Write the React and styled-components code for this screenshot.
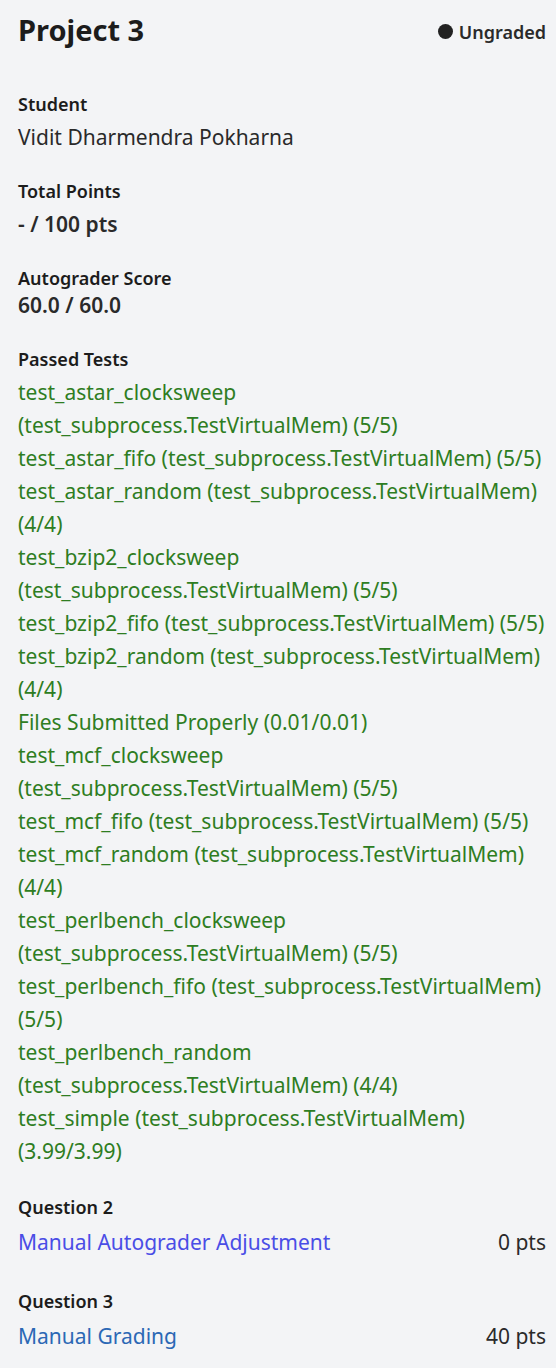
import styled, { createGlobalStyle } from 'styled-components';

const GlobalStyle = createGlobalStyle`
  html, body {
    margin: 0;
    padding: 0;
    background: #f3f4f6;
  }
  body {
    font-family: "Noto Sans", "Open Sans", sans-serif;
    color: #222;
  }
`;

const tests = [
  ['test_astar_clocksweep', '5/5'],
  ['test_astar_fifo', '5/5'],
  ['test_astar_random', '4/4'],
  ['test_bzip2_clocksweep', '5/5'],
  ['test_bzip2_fifo', '5/5'],
  ['test_bzip2_random', '4/4'],
  ['Files Submitted Properly', '0.01/0.01', true],
  ['test_mcf_clocksweep', '5/5'],
  ['test_mcf_fifo', '5/5'],
  ['test_mcf_random', '4/4'],
  ['test_perlbench_clocksweep', '5/5'],
  ['test_perlbench_fifo', '5/5'],
  ['test_perlbench_random', '4/4'],
  ['test_simple', '3.99/3.99'],
];

const questions = [
  { label: 'Question 2', title: 'Manual Autograder Adjustment', points: '0 pts', color: '#4a4de6', top: 27 },
  { label: 'Question 3', title: 'Manual Grading', points: '40 pts', color: '#2b68b5', top: 30 },
];

export default function App() {
  return (
    <>
      <GlobalStyle />
      <Page>
        <Header>
          <Title>Project 3</Title>
          <Status>
            <Dot />
            Ungraded
          </Status>
        </Header>

        <Section $top={44}>
          <Label>Student</Label>
          <Value>Vidit Dharmendra Pokharna</Value>
        </Section>

        <Section $top={25}>
          <Label>Total Points</Label>
          <Value $bold>- / 100 pts</Value>
        </Section>

        <Section $top={25}>
          <Label>Autograder Score</Label>
          <Score>60.0 / 60.0</Score>
        </Section>

        <Section $top={30}>
          <Label>Passed Tests</Label>
          <TestList>
            {tests.map(([name, score, plain]) => (
              <TestItem key={name}>
                {plain ? `${name} (${score})` : `${name} (test_subprocess.TestVirtualMem) (${score})`}
              </TestItem>
            ))}
          </TestList>
        </Section>

        {questions.map((q) => (
          <Section key={q.label} $top={q.top}>
            <Label>{q.label}</Label>
            <QuestionRow>
              <QuestionLink $color={q.color}>{q.title}</QuestionLink>
              <Points>{q.points}</Points>
            </QuestionRow>
          </Section>
        ))}
      </Page>
    </>
  );
}

const Page = styled.div`
  padding: 12px 10px 20px 18px;
`;

const Header = styled.div`
  display: flex;
  align-items: center;
  justify-content: space-between;
  height: 36px;
`;

const Title = styled.h1`
  margin: 0;
  font-size: 29px;
  line-height: 36px;
  font-weight: 700;
  color: #1c1c1c;
`;

const Status = styled.div`
  display: flex;
  align-items: center;
  gap: 6px;
  padding-top: 3px;
  font-size: 18px;
  font-weight: 600;
  color: #2a2a2a;
`;

const Dot = styled.span`
  width: 15px;
  height: 15px;
  border-radius: 50%;
  background: #222;
`;

const Section = styled.section`
  margin-top: ${(p) => p.$top}px;
`;

const Label = styled.div`
  font-size: 18px;
  line-height: 24px;
  font-weight: 600;
  color: #1c1c1c;
  margin-bottom: 5px;
`;

const Value = styled.div`
  font-size: 21px;
  line-height: 33px;
  font-weight: ${(p) => (p.$bold ? 600 : 400)};
  color: #2a2a2a;
`;

const Score = styled.div`
  font-size: 21px;
  line-height: 24px;
  font-weight: 600;
  color: #2a2a2a;
  margin-top: -2px;
`;

const TestList = styled.ul`
  list-style: none;
  margin: 0;
  padding: 0;
`;

const TestItem = styled.li`
  font-size: 21px;
  line-height: 33px;
  color: #2e7d22;
`;

const QuestionRow = styled.div`
  display: flex;
  justify-content: space-between;
  align-items: baseline;
  font-size: 21px;
  line-height: 33px;
  margin-top: 7px;
`;

const QuestionLink = styled.a`
  color: ${(p) => p.$color};
  text-decoration: none;
  cursor: pointer;
`;

const Points = styled.span`
  color: #2a2a2a;
`;
